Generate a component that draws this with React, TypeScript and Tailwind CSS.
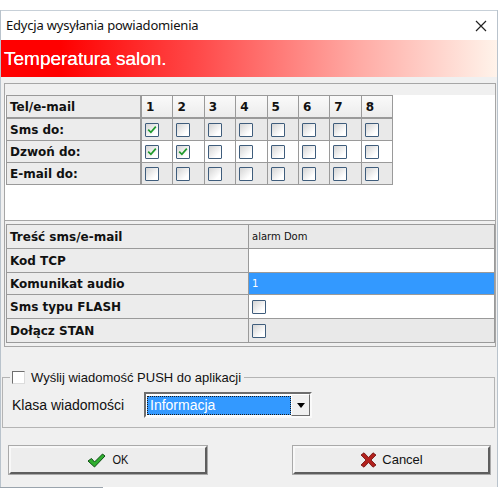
import React from 'react';

const sans = "font-['Liberation_Sans',Arial,sans-serif]";
const tahoma = "font-['DejaVu_Sans',Verdana,sans-serif]";

const Box = ({ checked }: { checked?: boolean }) => (
  <div className="w-[14px] h-[14px] border-[1.5px] border-[#3f5d7c] rounded-[1px] bg-[linear-gradient(135deg,#d4d4d4,#ffffff_75%)] flex items-center justify-center">
    {checked && (
      <svg width="10" height="9" viewBox="0 0 10 9">
        <path d="M1.2 4.6 L3.9 7.3 L8.8 1.6" fill="none" stroke="#1e9a2c" strokeWidth="1.7" />
      </svg>
    )}
  </div>
);

const rows = [
  { label: 'Sms do:', bg: 'bg-[#e9e9e9]', checks: [true, false, false, false, false, false, false, false] },
  { label: 'Dzwoń do:', bg: 'bg-white', checks: [true, true, false, false, false, false, false, false] },
  { label: 'E-mail do:', bg: 'bg-[#e9e9e9]', checks: [false, false, false, false, false, false, false, false] },
];

const App = () => {
  return (
    <div className={`w-[500px] h-[500px] bg-white overflow-hidden ${sans}`}>
      <div className="h-[10px]" />
      <div className="w-[498px] h-[477px] bg-[#f0f0f0] border-l border-r border-[#b9c3cc] flex flex-col">
        <div className="h-[30px] bg-white border-t border-[#c7d0d8] flex items-center justify-between pl-[5px] pr-[10px]">
          <div className="text-[13px] text-[#111] font-['Noto_Sans',sans-serif] tracking-[-0.2px]">Edycja wysyłania powiadomienia</div>
          <svg width="12" height="12" viewBox="0 0 12 12">
            <path d="M1 1 L11 11 M11 1 L1 11" stroke="#222" strokeWidth="1.2" />
          </svg>
        </div>
        <div className="h-[37px] bg-[linear-gradient(to_right,#ff0000_12%,#ff4a4a_40%,#ffaaa4_72%,#fff3ea_100%)] flex items-center pl-[3px]">
          <div className="text-[19px] text-white leading-none [text-shadow:0_0_0.6px_#fff]">Temperatura salon.</div>
        </div>
        <div className="mt-[6px] ml-[3px] w-[492px] h-[264px] border border-[#a6a6a6] flex flex-col">
          <div className="h-[11px]" />
          <div className="h-[126px] bg-white border-b border-[#a6a6a6] pl-[1px]">
            <div className={`grid grid-cols-[135px_repeat(8,31.4px)] w-fit border-t border-l border-[#9a9a9a] ${tahoma} font-bold text-[12px] text-[#111]`}>
              <div className="h-[23px] border-r-2 border-b-2 border-[#9a9a9a] bg-[#ececec] flex items-center pl-[3px]">Tel/e-mail</div>
              {[1, 2, 3, 4, 5, 6, 7, 8].map((n) => (
                <div key={n} className="h-[23px] border-r border-b-2 border-[#9a9a9a] bg-[linear-gradient(#fafafa,#ececec)] flex items-center pl-[4px]">{n}</div>
              ))}
              {rows.map((r) => (
                <React.Fragment key={r.label}>
                  <div className="h-[22px] border-r-2 border-b border-[#9a9a9a] bg-[#ececec] flex items-center pl-[3px]">{r.label}</div>
                  {r.checks.map((c, i) => (
                    <div key={i} className={`h-[22px] border-r border-b border-[#9a9a9a] ${r.bg} flex items-center pl-[3px]`}>
                      <Box checked={c} />
                    </div>
                  ))}
                </React.Fragment>
              ))}
            </div>
          </div>
          <div className="mt-[3px] pl-[1px]">
            <div className={`grid grid-cols-[242px_246px] border-t border-l border-[#9a9a9a] ${tahoma} text-[12px] text-[#111]`}>
              <div className="h-[24px] border-r border-b border-[#9a9a9a] bg-[#ececec] flex items-center pl-[3px] font-bold">Treść sms/e-mail</div>
              <div className="h-[24px] border-r border-b border-[#9a9a9a] bg-[#e9e9e9] flex items-center pl-[3px] text-[10px]">alarm Dom</div>
              <div className="h-[24px] border-r border-b border-[#9a9a9a] bg-[#ececec] flex items-center pl-[3px] font-bold">Kod TCP</div>
              <div className="h-[24px] border-r border-b border-[#9a9a9a] bg-white" />
              <div className="h-[22px] border-r border-b border-[#9a9a9a] bg-[#ececec] flex items-center pl-[3px] font-bold">Komunikat audio</div>
              <div className="h-[22px] border-r border-b border-[#9a9a9a] bg-[#3399ff] flex items-center pl-[3px] text-white text-[10px]">1</div>
              <div className="h-[24px] border-r border-b border-[#9a9a9a] bg-[#ececec] flex items-center pl-[3px] font-bold">Sms typu FLASH</div>
              <div className="h-[24px] border-r border-b border-[#9a9a9a] bg-white flex items-center pl-[3px]"><Box /></div>
              <div className="h-[24px] border-r border-b border-[#9a9a9a] bg-[#ececec] flex items-center pl-[3px] font-bold">Dołącz STAN</div>
              <div className="h-[24px] border-r border-b border-[#9a9a9a] bg-[#e9e9e9] flex items-center pl-[3px]"><Box /></div>
            </div>
          </div>
        </div>
        <div className="mt-[30px] ml-[1px] w-[493px] h-[51px] border border-[#b4b4b4] relative">
          <div className="absolute -top-[8px] left-[7px] bg-[#f0f0f0] flex items-center gap-[6px] pr-[3px] pl-[2px]">
            <div className="w-[13px] h-[13px] bg-white border border-t-[#6f6f6f] border-l-[#6f6f6f] border-b-[#dcdcdc] border-r-[#dcdcdc]" />
            <div className="text-[13px] leading-[15px] text-[#111]">Wyślij wiadomość PUSH do aplikacji</div>
          </div>
          <div className="flex items-center mt-[14px]">
            <div className="ml-[9px] w-[132px] text-[14px] text-[#111]">Klasa wiadomości</div>
            <div className="w-[168px] h-[26px] border-2 border-t-[#6d6d6d] border-l-[#6d6d6d] border-b-[#fafafa] border-r-[#fafafa] bg-white flex items-center">
              <div className="ml-[1px] w-[144px] h-[19px] bg-[#3399ff] border border-dotted border-[#1a1a1a] flex items-center pl-[2px] text-[14px] text-white">Informacja</div>
              <div className="ml-auto w-[19px] h-[22px] bg-[#f0f0f0] border border-t-white border-l-white border-b-[#6d6d6d] border-r-[#6d6d6d] flex items-center justify-center">
                <svg width="8" height="5" viewBox="0 0 8 5"><path d="M0 0 L8 0 L4 5 Z" fill="#000" /></svg>
              </div>
            </div>
          </div>
        </div>
        <div className="mt-[18px] flex">
          <div className="ml-[8px] w-[198px] h-[28px] bg-[#ededed] border-2 border-t-[#f8f8f8] border-l-[#f8f8f8] border-b-[#5e5e5e] border-r-[#5e5e5e] outline outline-1 outline-[#a9a9a9] flex items-center justify-center gap-[5px]">
            <svg width="19" height="15" viewBox="0 0 19 15">
              <path d="M1 8 L4.5 5.5 L7.5 9 L15.5 1 L18 3 L7.5 14 Z" fill="#2fae2f" stroke="#0f4f14" strokeWidth="1" strokeLinejoin="round" />
            </svg>
            <div className="text-[13px] text-[#111] scale-x-[0.85]">OK</div>
          </div>
          <div className="ml-[86px] w-[197px] h-[28px] bg-[#ededed] border-2 border-t-[#f8f8f8] border-l-[#f8f8f8] border-b-[#5e5e5e] border-r-[#5e5e5e] outline outline-1 outline-[#a9a9a9] flex items-center justify-center gap-[5px]">
            <svg width="17" height="16" viewBox="0 0 17 16">
              <path d="M1 3 L4 0.8 L8.5 5.5 L13 0.8 L16 3 L11 8 L16 13 L13 15.2 L8.5 10.5 L4 15.2 L1 13 L6 8 Z" fill="#b2211d" stroke="#6d0d0b" strokeWidth="0.8" strokeLinejoin="round" />
            </svg>
            <div className="text-[13px] text-[#111]">Cancel</div>
          </div>
        </div>
      </div>
      <div className="w-[103px] h-px bg-[#9aa4ad]" />
    </div>
  );
};

export default App;
